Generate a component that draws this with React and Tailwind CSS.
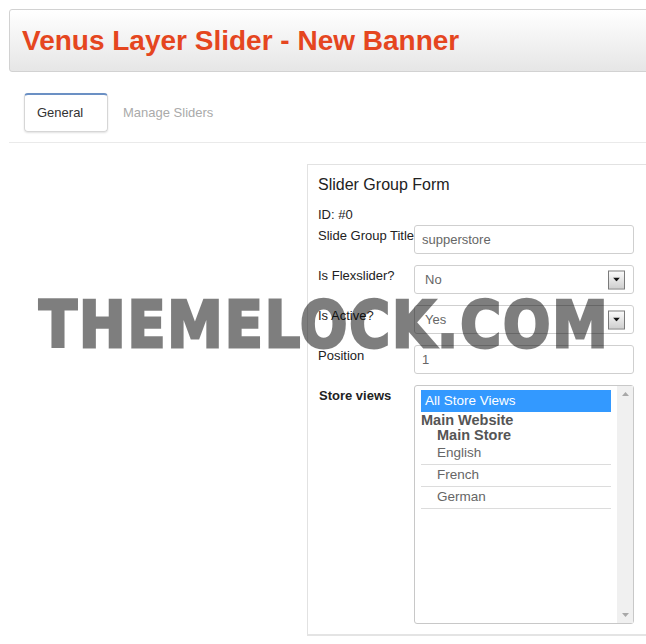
const storeRows = [
  { label: 'English' },
  { label: 'French' },
  { label: 'German' },
];

function SelectArrow() {
  return (
    <span className="absolute right-[8px] top-1/2 -translate-y-1/2 w-[17px] h-[19px] border border-[#7a7a7a] bg-linear-to-b from-[#fafafa] to-[#cfcfcf] flex items-center justify-center">
      <svg width="7" height="4" viewBox="0 0 7 4">
        <path d="M0 0h7L3.5 4z" fill="#111" />
      </svg>
    </span>
  );
}

function Row({ label, children, bold }) {
  return (
    <div className="flex">
      <div className={`w-[96px] shrink-0 pt-[3px] text-[13px] leading-[15px] whitespace-nowrap ${bold ? 'font-bold text-[#222] pl-[1px]' : 'text-[#222]'}`}>
        {label}
      </div>
      {children}
    </div>
  );
}

function TextBox({ value }) {
  return (
    <div className="w-[220px] h-[29px] border border-[#cfcfcf] rounded-[3px] bg-white flex items-center pl-[7px] text-[13px] text-[#666]">
      {value}
    </div>
  );
}

function SelectBox({ value }) {
  return (
    <div className="relative w-[220px] h-[29px] border border-[#cfcfcf] rounded-[3px] bg-white flex items-center pl-[10px] text-[13px] text-[#666]">
      {value}
      <SelectArrow />
    </div>
  );
}

export default function App() {
  return (
    <div className="relative min-h-screen overflow-hidden bg-white font-['Liberation_Sans',Arial,sans-serif]">
      <div className="pl-[9px] pt-[9px]">
        <header className="h-[63px] -mr-[10px] border border-[#d2d2d2] rounded-[3px] bg-linear-to-b from-white to-[#e6e6e6] flex items-center pl-[12px]">
          <h1 className="text-[28px] font-bold text-[#e5461f] leading-none">Venus Layer Slider - New Banner</h1>
        </header>

        <nav className="mt-[21px] pl-[15px] pb-[10px] border-b border-[#eaeaea] flex items-center">
          <div className="w-[84px] h-[39px] border border-[#d6d6d6] border-t-2 border-t-[#6b90c4] rounded-[4px] shadow-[0_1px_2px_rgba(0,0,0,0.12)] flex items-center pl-[12px] text-[13px] text-[#333]">
            General
          </div>
          <div className="ml-[15px] text-[13px] text-[#aaa]">Manage Sliders</div>
        </nav>

        <div className="flex justify-end mt-[21px] -mr-[10px]">
          <section className="w-[349px] border-l border-t border-[#e2e2e2] border-b-2 border-b-[#e4e4e4] pl-[10px] pt-[10px] pb-[10px]">
            <h2 className="text-[16px] leading-[20px] text-[#222]">Slider Group Form</h2>
            <div className="mt-[12px] text-[13px] leading-[15px] text-[#222]">ID: #0</div>
            <div className="mt-[3px] flex flex-col gap-[11px]">
              <Row label="Slide Group Title">
                <TextBox value="supperstore" />
              </Row>
              <Row label="Is Flexslider?">
                <SelectBox value="No" />
              </Row>
              <Row label="Is Active?">
                <SelectBox value="Yes" />
              </Row>
              <Row label="Position">
                <TextBox value="1" />
              </Row>
              <Row label="Store views" bold>
                <div className="w-[220px] h-[239px] border border-[#c8c8c8] rounded-[3px] bg-white flex">
                  <div className="flex-1 pl-[6px] pr-[6px] pt-[4px]">
                    <div className="h-[22px] bg-[#3399ff] text-white text-[13.5px] flex items-center pl-[4px]">All Store Views</div>
                    <div className="text-[14.5px] font-bold text-[#555] leading-[15px] mt-[1px]">Main Website</div>
                    <div className="text-[14.5px] font-bold text-[#555] leading-[15px] pl-[16px]">Main Store</div>
                    {storeRows.map((r) => (
                      <div key={r.label} className="h-[22px] border-b border-[#dcdcdc] pl-[16px] text-[13.5px] text-[#666] flex items-center">
                        {r.label}
                      </div>
                    ))}
                  </div>
                  <div className="w-[16px] bg-[#f0f0f0] flex flex-col justify-between items-center py-[6px]">
                    <svg width="7" height="4" viewBox="0 0 7 4">
                      <path d="M0 4h7L3.5 0z" fill="#a8a8a8" />
                    </svg>
                    <svg width="7" height="4" viewBox="0 0 7 4">
                      <path d="M0 0h7L3.5 4z" fill="#a8a8a8" />
                    </svg>
                  </div>
                </div>
              </Row>
            </div>
          </section>
        </div>
      </div>

      <div className="absolute left-[39px] top-[293px] origin-left scale-x-[0.87] opacity-50 font-['DejaVu_Sans',Verdana,sans-serif] text-[64px] leading-[64px] font-bold tracking-[2.2px] text-black [-webkit-text-stroke:3px_black] whitespace-nowrap pointer-events-none select-none">
        THEMELOCK.COM
      </div>
    </div>
  );
}
